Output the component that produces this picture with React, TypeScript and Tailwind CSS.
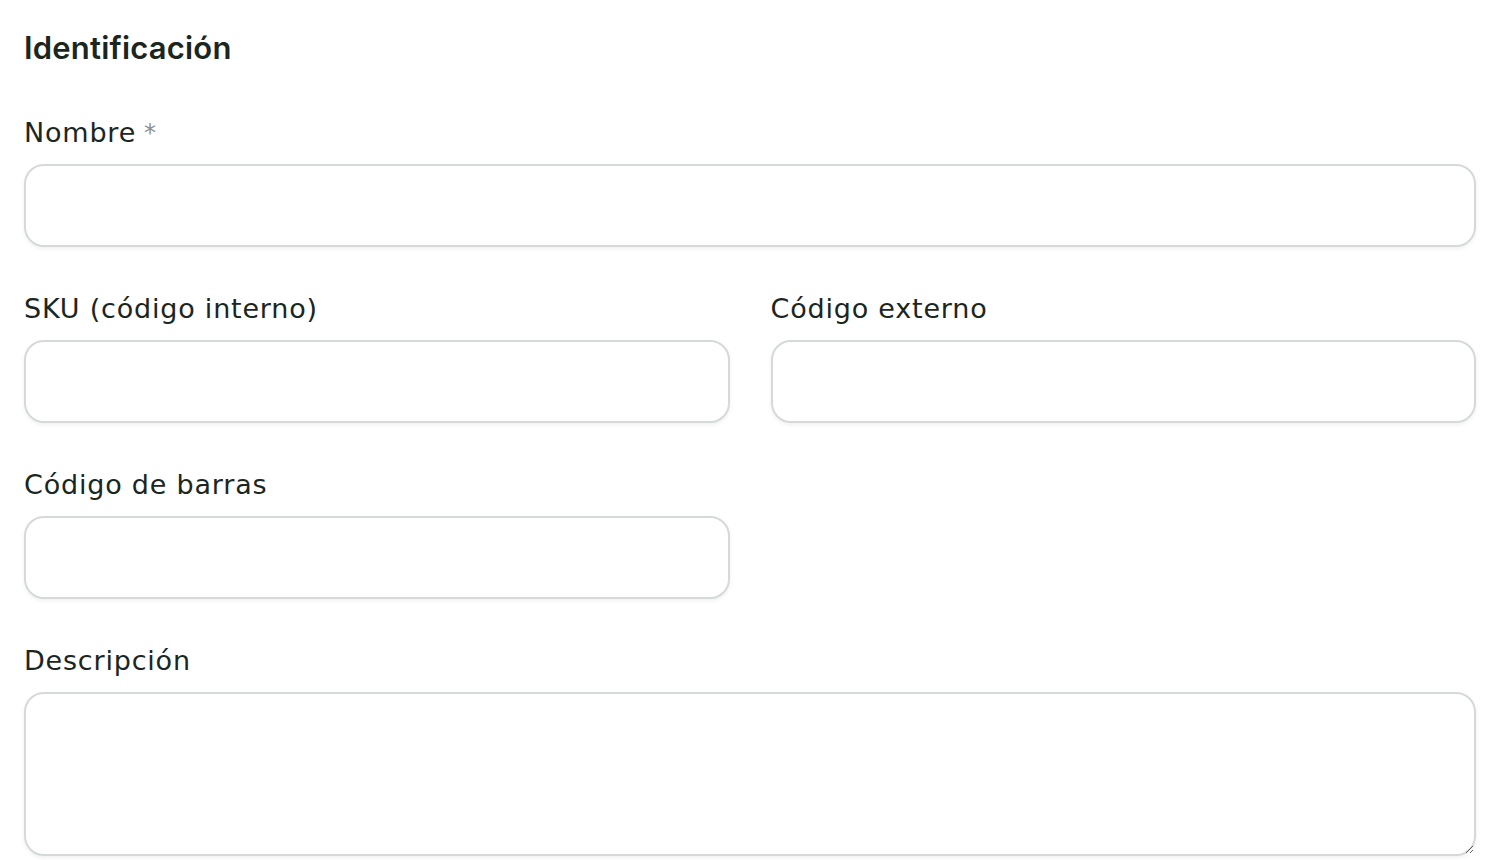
import React from "react";

const labelCls =
  "block h-[36px] leading-[38px] text-[27px] tracking-[0.8px] text-[#1b2621] font-['DejaVu_Sans',sans-serif]";
const inputCls =
  "block w-full h-[83px] rounded-[20px] border-2 border-[#d5dad8] bg-white shadow-[0_2px_4px_rgba(0,0,0,0.06)] outline-none";

export default function App() {
  return (
    <div className="min-h-screen bg-white px-[24px] font-['DejaVu_Sans',sans-serif]">
      <h2 className="pt-[30px] h-[66px] leading-[36px] text-[31px] tracking-[0.2px] font-semibold text-[#1b2621] font-['Inter',sans-serif]">
        Identificación
      </h2>
      <div className="mt-[48px]">
        <label className={labelCls}>
          Nombre<span className="ml-[8px] text-[#8a908e] text-[24px] align-top">*</span>
        </label>
        <input className={`${inputCls} mt-[14px]`} />
      </div>
      <div className="grid grid-cols-2 gap-x-[41px] mt-[43px]">
        <div>
          <label className={labelCls}>SKU (código interno)</label>
          <input className={`${inputCls} mt-[14px]`} />
        </div>
        <div>
          <label className={labelCls}>Código externo</label>
          <input className={`${inputCls} mt-[14px]`} />
        </div>
      </div>
      <div className="grid grid-cols-2 gap-x-[41px] mt-[43px]">
        <div>
          <label className={labelCls}>Código de barras</label>
          <input className={`${inputCls} mt-[14px]`} />
        </div>
      </div>
      <div className="mt-[43px]">
        <label className={labelCls}>Descripción</label>
        <textarea className="block w-full h-[164px] mt-[14px] rounded-[20px] border-2 border-[#d5dad8] bg-white shadow-[0_2px_4px_rgba(0,0,0,0.06)] outline-none resize-y" />
      </div>
    </div>
  );
}
